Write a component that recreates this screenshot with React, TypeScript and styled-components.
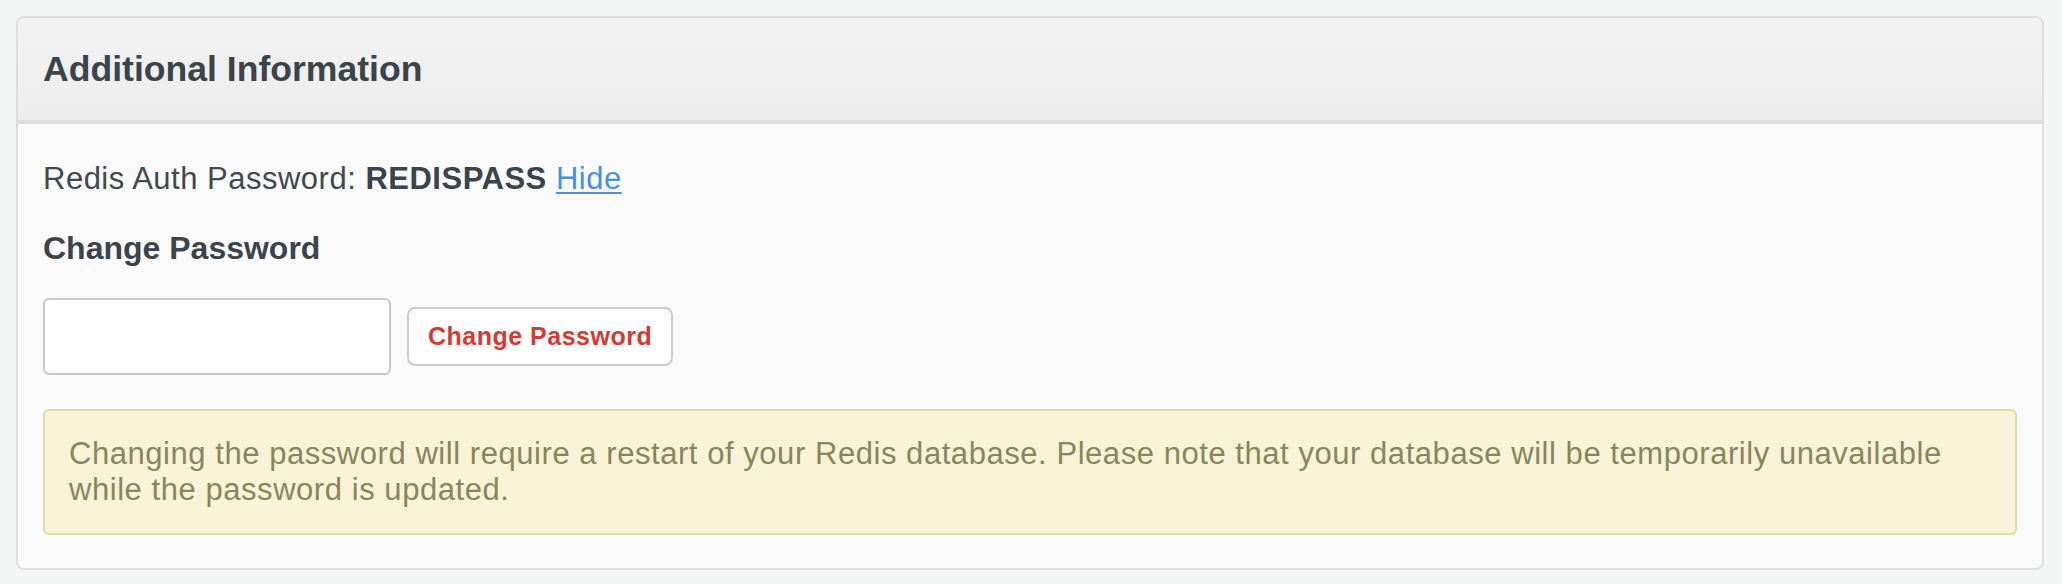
import React from "react";
import styled, { createGlobalStyle } from "styled-components";

const GlobalStyle = createGlobalStyle`
  html, body {
    margin: 0;
    padding: 0;
    background: #f4f6f5;
  }
  body {
    padding: 16px;
    font-family: "Liberation Sans", Arial, Helvetica, sans-serif;
    color: #3e464d;
  }
  * { box-sizing: border-box; }
`;

const Panel = styled.section`
  width: 2028px;
  border: 2px solid #dcdfdd;
  border-radius: 8px;
  background: #fafafa;
  overflow: hidden;
`;

const PanelHeader = styled.header`
  height: 106px;
  display: flex;
  align-items: center;
  padding: 0 24px 0 25px;
  background: linear-gradient(#f1f2f1, #ecedec);
  border-bottom: 4px solid #dcdfdd;
`;

const Title = styled.h3`
  margin: 0;
  font-size: 35.6px;
  font-weight: 700;
  color: #3b444b;
`;

const PanelBody = styled.div`
  display: flex;
  flex-direction: column;
  align-items: flex-start;
  padding: 37px 25px 33px 25px;
`;

const InfoLine = styled.p`
  margin: 0;
  font-size: 31px;
  line-height: 36px;
  letter-spacing: 0.5px;
  color: #414950;
`;

const Secret = styled.strong`
  font-weight: 700;
  color: #3b444b;
`;

const Link = styled.a`
  color: #4a8fe0;
  text-decoration: underline;
  text-decoration-thickness: 2px;
  text-underline-offset: 3px;
  cursor: pointer;
`;

const SectionTitle = styled.h4`
  margin: 32px 0 0 0;
  font-size: 32px;
  line-height: 38px;
  font-weight: 700;
  color: #3b444b;
`;

const FormRow = styled.div`
  margin-top: 31px;
  display: flex;
  align-items: center;
  gap: 16px;
`;

const PasswordInput = styled.input`
  width: 348px;
  height: 77px;
  border: 2px solid #c9c9c9;
  border-radius: 6px;
  background: #ffffff;
  font-size: 28px;
  padding: 0 14px;
  outline: none;
`;

const DangerButton = styled.button`
  height: 59px;
  padding: 0 19px;
  border: 2px solid #cbcbcb;
  border-radius: 8px;
  background: #fdfdfd;
  color: #cf3d37;
  font-family: "Liberation Sans", Arial, Helvetica, sans-serif;
  font-size: 25px;
  font-weight: 700;
  letter-spacing: 0.5px;
  cursor: pointer;
`;

const Alert = styled.div`
  margin-top: 34px;
  width: 100%;
  padding: 25px 24px;
  border: 2px solid #e1dca3;
  border-radius: 6px;
  background: #f8f3d6;
  color: #87865c;
  font-size: 31px;
  line-height: 36px;
  letter-spacing: 0.55px;
`;

export default function App() {
  return (
    <>
      <GlobalStyle />
      <Panel>
        <PanelHeader>
          <Title>Additional Information</Title>
        </PanelHeader>
        <PanelBody>
          <InfoLine>
            Redis Auth Password: <Secret>REDISPASS</Secret> <Link>Hide</Link>
          </InfoLine>
          <SectionTitle>Change Password</SectionTitle>
          <FormRow>
            <PasswordInput type="password" />
            <DangerButton>Change Password</DangerButton>
          </FormRow>
          <Alert>
            Changing the password will require a restart of your Redis database. Please note that your
            database will be temporarily unavailable while the password is updated.
          </Alert>
        </PanelBody>
      </Panel>
    </>
  );
}
